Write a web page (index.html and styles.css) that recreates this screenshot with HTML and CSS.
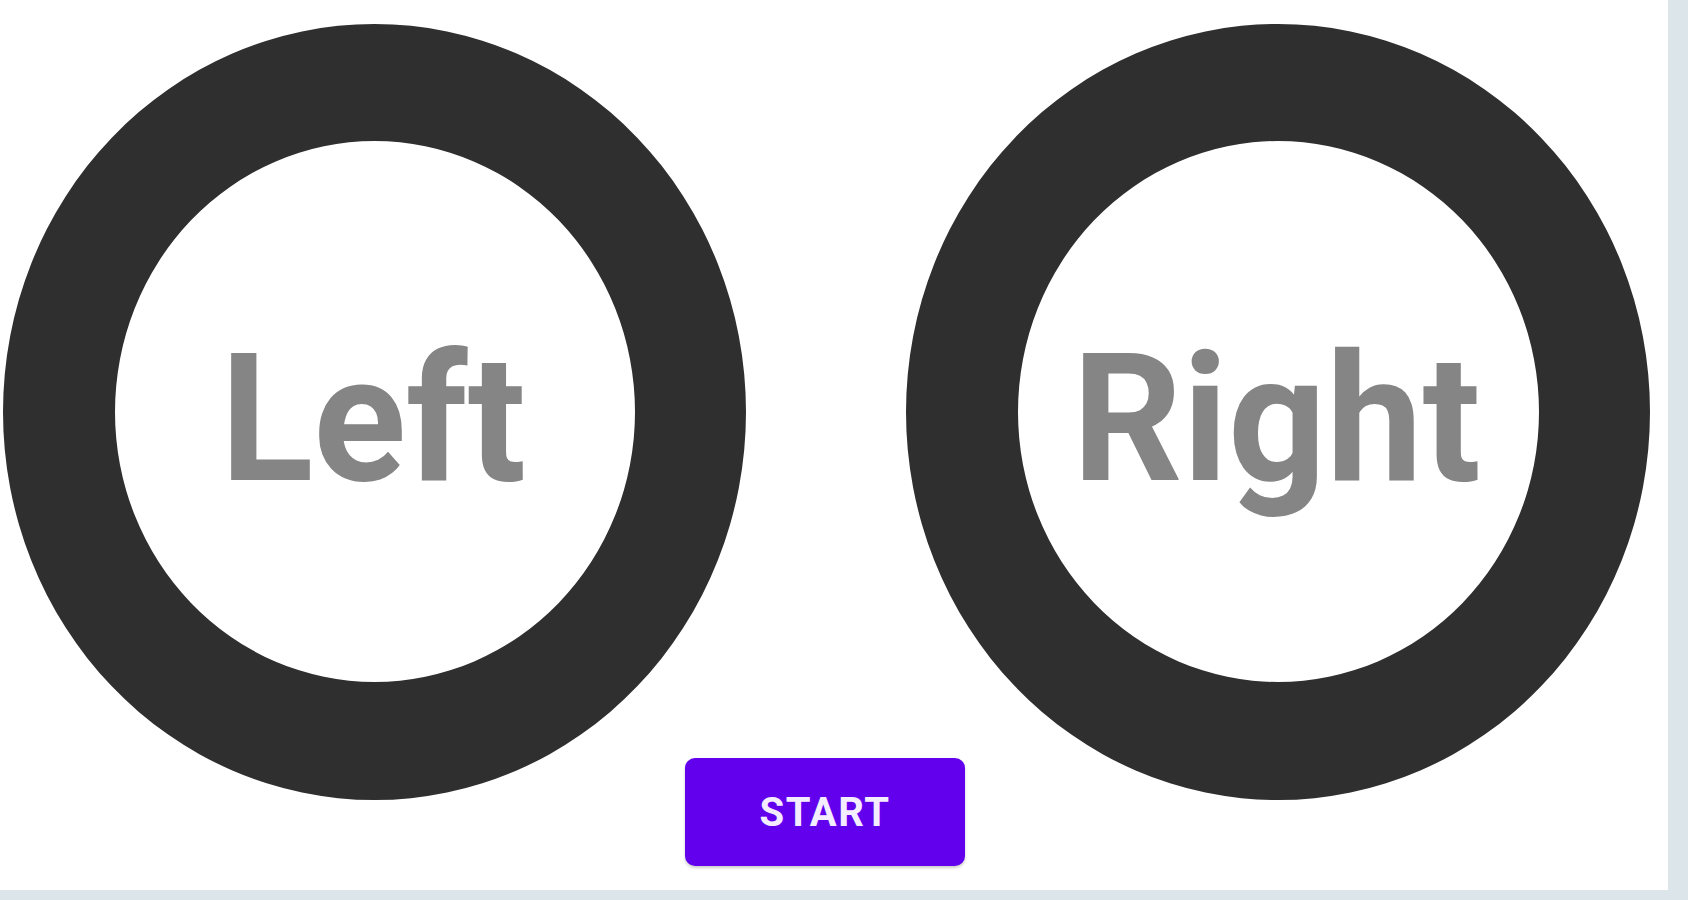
FILE: index.html
```html
<!DOCTYPE html>
<html lang="en">
<head>
    <meta charset="UTF-8">
    <meta name="viewport" content="width=device-width, initial-scale=1.0">
    <title>Left / Right</title>
    <link rel="stylesheet" href="styles.css">
</head>
<body>
    <div class="screen">
        <div class="pad-row">
            <!-- Left pad -->
            <div class="pad pad-left">
                <span class="pad-label">Left</span>
            </div>

            <!-- Right pad -->
            <div class="pad pad-right">
                <span class="pad-label">Right</span>
            </div>

            <button class="start-btn" type="button">Start</button>
        </div>
    </div>
</body>
</html>
```

FILE: styles.css
```css
html, body {
    margin: 0;
    padding: 0;
}

body {
    font-family: Roboto, "Noto Sans", Arial, sans-serif;
    background-color: #dce6ea;
    width: 1688px;
    height: 900px;
    overflow: hidden;
}

.screen {
    width: 1668px;
    height: 890px;
    background-color: #ffffff;
    box-sizing: border-box;
    padding: 24px 0 0 3px;
}

.pad-row {
    display: grid;
    grid-template-columns: 743px 160px 744px;
    grid-template-rows: 734px 42px 66px;
}

.pad {
    grid-row: 1 / 3;
    box-sizing: border-box;
    height: 776px;
    border-radius: 50%;
    border-style: solid;
    border-color: #2f2f2f;
    border-width: 117px 111px 118px 112px;
    display: flex;
    align-items: center;
    justify-content: center;
}

.pad-left {
    grid-column: 1;
}

.pad-right {
    grid-column: 3;
}

.pad-label {
    font-size: 172px;
    font-weight: 700;
    color: #858585;
    line-height: 1;
    transform: scaleY(1.04);
    margin-top: 14px;
    margin-right: 4px;
}

.start-btn {
    grid-column: 1 / -1;
    grid-row: 2 / 4;
    justify-self: center;
    margin-right: 3px;
    width: 280px;
    height: 108px;
    border: none;
    border-radius: 10px;
    background-color: #6200ee;
    color: #f4ecff;
    font-family: Roboto, "Noto Sans", Arial, sans-serif;
    font-size: 40px;
    font-weight: 700;
    letter-spacing: 1.5px;
    text-transform: uppercase;
    box-shadow: 0 2px 3px rgba(0, 0, 0, 0.2);
    padding: 0;
}
```
